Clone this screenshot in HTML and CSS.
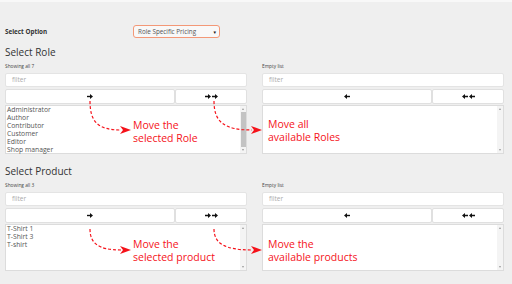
FILE: index.html
```html
<!DOCTYPE html>
<html lang="en">
<head>
  <meta charset="UTF-8" />
  <title>Role Specific Pricing</title>
  <link rel="stylesheet" href="styles.css">
</head>
<body>
  <div class="wrap">
    <div class="option-row">
      <label class="option-label">Select Option</label>
      <div class="select">Role Specific Pricing <span class="caret">&#9662;</span></div>
    </div>

    <h2>Select Role</h2>
    <div class="dual">
      <div class="col">
        <div class="col-label">Showing all 7</div>
        <div class="filter">filter</div>
        <div class="btns">
          <div class="btn btn-one"><svg width="6" height="5" viewBox="0 0 6 5"><path d="M0 2.5H3.5" stroke="#111" stroke-width="1.4"/><path d="M3 0L6 2.5L3 5Z" fill="#111"/></svg></div>
          <div class="btn btn-all"><svg width="13" height="5" viewBox="0 0 13 5"><path d="M0 2.5H3.5M7 2.5H10.5" stroke="#111" stroke-width="1.4"/><path d="M3 0L6 2.5L3 5ZM10 0L13 2.5L10 5Z" fill="#111"/></svg></div>
        </div>
        <div class="list list-role">
          <ul class="items">
            <li>Administrator</li>
            <li>Author</li>
            <li>Contributor</li>
            <li>Customer</li>
            <li>Editor</li>
            <li>Shop manager</li>
          </ul>
          <div class="scroll"><span class="up"></span><span class="thumb"></span><span class="down"></span></div>
        </div>
      </div>
      <div class="col">
        <div class="col-label">Empty list</div>
        <div class="filter">filter</div>
        <div class="btns">
          <div class="btn btn-one"><svg width="6" height="5" viewBox="0 0 6 5"><path d="M2.5 2.5H6" stroke="#111" stroke-width="1.4"/><path d="M3 0L0 2.5L3 5Z" fill="#111"/></svg></div>
          <div class="btn btn-all"><svg width="13" height="5" viewBox="0 0 13 5"><path d="M2.5 2.5H6M9.5 2.5H13" stroke="#111" stroke-width="1.4"/><path d="M3 0L0 2.5L3 5ZM10 0L7 2.5L10 5Z" fill="#111"/></svg></div>
        </div>
        <div class="list list-role">
          <ul class="items"></ul>
          <div class="scroll"><span class="up"></span><span class="fill"></span><span class="down"></span></div>
        </div>
      </div>
    </div>

    <h2 class="second">Select Product</h2>
    <div class="dual">
      <div class="col">
        <div class="col-label">Showing all 3</div>
        <div class="filter">filter</div>
        <div class="btns">
          <div class="btn btn-one"><svg width="6" height="5" viewBox="0 0 6 5"><path d="M0 2.5H3.5" stroke="#111" stroke-width="1.4"/><path d="M3 0L6 2.5L3 5Z" fill="#111"/></svg></div>
          <div class="btn btn-all"><svg width="13" height="5" viewBox="0 0 13 5"><path d="M0 2.5H3.5M7 2.5H10.5" stroke="#111" stroke-width="1.4"/><path d="M3 0L6 2.5L3 5ZM10 0L13 2.5L10 5Z" fill="#111"/></svg></div>
        </div>
        <div class="list list-product">
          <ul class="items">
            <li>T-Shirt 1</li>
            <li>T-Shirt 3</li>
            <li>T-shirt</li>
          </ul>
          <div class="scroll"><span class="up"></span><span class="fill"></span><span class="down"></span></div>
        </div>
      </div>
      <div class="col">
        <div class="col-label">Empty list</div>
        <div class="filter">filter</div>
        <div class="btns">
          <div class="btn btn-one"><svg width="6" height="5" viewBox="0 0 6 5"><path d="M2.5 2.5H6" stroke="#111" stroke-width="1.4"/><path d="M3 0L0 2.5L3 5Z" fill="#111"/></svg></div>
          <div class="btn btn-all"><svg width="13" height="5" viewBox="0 0 13 5"><path d="M2.5 2.5H6M9.5 2.5H13" stroke="#111" stroke-width="1.4"/><path d="M3 0L0 2.5L3 5ZM10 0L7 2.5L10 5Z" fill="#111"/></svg></div>
        </div>
        <div class="list list-product">
          <ul class="items"></ul>
          <div class="scroll"><span class="up"></span><span class="fill"></span><span class="down"></span></div>
        </div>
      </div>
    </div>
  </div>

  <!-- annotation layer -->
  <svg class="marks" width="512" height="284" viewBox="0 0 512 284">
    <g fill="none" stroke="#f5121a" stroke-width="1.2" stroke-dasharray="3 2">
      <path d="M90 101 C90 122 98 130 121 130"/>
      <path d="M214 101 C214 122 224 130 252 130"/>
      <path d="M90 229 C90 243 98 250 121 250"/>
      <path d="M214 229 C214 243 224 250 252 250"/>
    </g>
    <g fill="#f5121a">
      <path d="M120 126L131 130L120 134L123 130Z"/>
      <path d="M251 126L262 130L251 134L254 130Z"/>
      <path d="M120 246L131 250L120 254L123 250Z"/>
      <path d="M251 246L262 250L251 254L254 250Z"/>
    </g>
  </svg>
  <div class="note note-1"><p>Move the</p><p>selected Role</p></div>
  <div class="note note-2"><p>Move all</p><p>available Roles</p></div>
  <div class="note note-3"><p>Move the</p><p>selected product</p></div>
  <div class="note note-4"><p>Move the</p><p>available products</p></div>
</body>
</html>
```

FILE: styles.css
```css
* {
  box-sizing: border-box;
  margin: 0;
  padding: 0;
}
body {
  background: #efefef;
  border-top: 2px solid #f8f8f8;
  font-family: 'Open Sans', 'DejaVu Sans', sans-serif;
  color: #444;
  position: relative;
  width: 512px;
  height: 284px;
  overflow: hidden;
}
.wrap {
  padding: 0 8px 0 5px;
}
.option-row {
  display: flex;
  align-items: center;
  height: 13px;
  margin-top: 23px;
}
.option-label {
  width: 128px;
  font-size: 6.3px;
  font-weight: 700;
  color: #333;
}
.select {
  width: 87px;
  height: 13px;
  border: 1px solid #f39877;
  border-radius: 3px;
  background: #f8f8f8;
  font-size: 6.3px;
  color: #555;
  padding: 0 3px 0 4px;
  display: flex;
  align-items: center;
  justify-content: space-between;
}
.caret {
  font-size: 5px;
  color: #111;
}
h2 {
  font-size: 10px;
  line-height: 12px;
  font-weight: 400;
  color: #333;
  margin-top: 8px;
}
h2.second {
  margin-top: 11px;
}
.dual {
  display: flex;
  gap: 15px;
}
.col {
  width: 242px;
}
.col-label {
  font-size: 4.8px;
  line-height: 8px;
  height: 8px;
  margin-top: 4px;
  color: #444;
}
.filter {
  height: 14px;
  margin-top: 3px;
  background: #fff;
  border: 1px solid #e4e4e4;
  border-radius: 2px;
  font-size: 6.5px;
  line-height: 12px;
  color: #aaa;
  padding-left: 6px;
}
.btns {
  display: flex;
  margin-top: 2px;
  height: 15px;
}
.btn {
  background: #fff;
  border: 1px solid #e0e0e0;
  border-radius: 2px;
  display: flex;
  align-items: center;
  justify-content: center;
}
.btn-one {
  width: 170px;
}
.btn-all {
  width: 72px;
}
.btn svg {
  display: block;
}
.list {
  display: flex;
  margin-top: 1px;
  background: #fff;
  border: 1px solid #dcdcdc;
}
.list-role {
  height: 49px;
}
.list-product {
  height: 47px;
}
.items {
  flex: 1;
  list-style: none;
  font-size: 6.8px;
  line-height: 8px;
  color: #555;
  padding: 0 0 0 1px;
}
.scroll {
  width: 6px;
  display: flex;
  flex-direction: column;
  background: #f4f4f4;
}
.scroll .up,
.scroll .down {
  height: 6px;
  position: relative;
}
.scroll .up::after,
.scroll .down::after {
  content: '';
  position: absolute;
  left: 2px;
  top: 2px;
  border-left: 1px solid transparent;
  border-right: 1px solid transparent;
}
.scroll .up::after {
  border-bottom: 2px solid #999;
}
.scroll .down::after {
  border-top: 2px solid #999;
}
.scroll .thumb {
  flex: 1;
  background: #c3c3c3;
  margin: 0 0.5px;
}
.scroll .fill {
  flex: 1;
}
.marks {
  position: absolute;
  top: -2px;
  left: 0;
  pointer-events: none;
}
.note {
  position: absolute;
  display: flex;
  flex-direction: column;
  gap: 0;
  font-size: 10.5px;
  line-height: 13px;
  color: #f5121a;
  white-space: nowrap;
}
.note-1 {
  left: 133px;
  top: 117px;
}
.note-2 {
  left: 268px;
  top: 116px;
}
.note-3 {
  left: 133px;
  top: 236px;
}
.note-4 {
  left: 268px;
  top: 236px;
}
```
